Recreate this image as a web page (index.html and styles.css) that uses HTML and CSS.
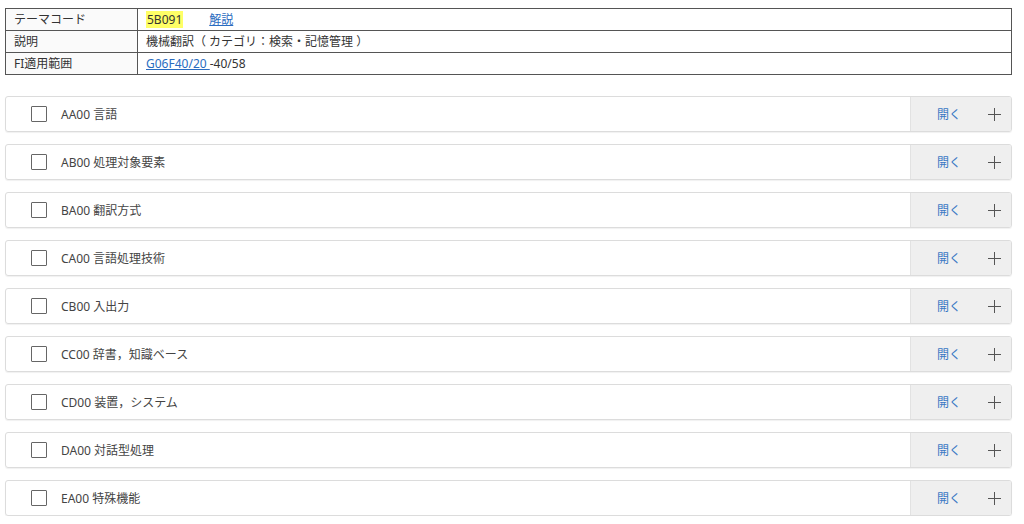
FILE: index.html
```html
<!DOCTYPE html>
<html lang="ja">
<head>
    <meta charset="UTF-8">
    <title>テーマコード 5B091</title>
    <link rel="stylesheet" href="styles.css">
</head>
<body>
    <div class="page">
        <table class="theme">
            <tr>
                <th>テーマコード</th>
                <td><span class="mark">5B091</span><a class="note" href="#">解説</a></td>
            </tr>
            <tr>
                <th>説明</th>
                <td>機械翻訳（ カテゴリ：検索・記憶管理 ）</td>
            </tr>
            <tr>
                <th>FI適用範囲</th>
                <td><a href="#">G06F40/20 </a>-40/58</td>
            </tr>
        </table>

        <div class="list">
            <div class="item">
                <label class="item-main"><span class="box"></span>AA00 言語</label>
                <div class="item-side"><span class="open">開く</span><svg class="plus" viewBox="0 0 13 13"><path d="M6.5 0V13M0 6.5H13"/></svg></div>
            </div>
            <div class="item">
                <label class="item-main"><span class="box"></span>AB00 処理対象要素</label>
                <div class="item-side"><span class="open">開く</span><svg class="plus" viewBox="0 0 13 13"><path d="M6.5 0V13M0 6.5H13"/></svg></div>
            </div>
            <div class="item">
                <label class="item-main"><span class="box"></span>BA00 翻訳方式</label>
                <div class="item-side"><span class="open">開く</span><svg class="plus" viewBox="0 0 13 13"><path d="M6.5 0V13M0 6.5H13"/></svg></div>
            </div>
            <div class="item">
                <label class="item-main"><span class="box"></span>CA00 言語処理技術</label>
                <div class="item-side"><span class="open">開く</span><svg class="plus" viewBox="0 0 13 13"><path d="M6.5 0V13M0 6.5H13"/></svg></div>
            </div>
            <div class="item">
                <label class="item-main"><span class="box"></span>CB00 入出力</label>
                <div class="item-side"><span class="open">開く</span><svg class="plus" viewBox="0 0 13 13"><path d="M6.5 0V13M0 6.5H13"/></svg></div>
            </div>
            <div class="item">
                <label class="item-main"><span class="box"></span>CC00 辞書，知識ベース</label>
                <div class="item-side"><span class="open">開く</span><svg class="plus" viewBox="0 0 13 13"><path d="M6.5 0V13M0 6.5H13"/></svg></div>
            </div>
            <div class="item">
                <label class="item-main"><span class="box"></span>CD00 装置，システム</label>
                <div class="item-side"><span class="open">開く</span><svg class="plus" viewBox="0 0 13 13"><path d="M6.5 0V13M0 6.5H13"/></svg></div>
            </div>
            <div class="item">
                <label class="item-main"><span class="box"></span>DA00 対話型処理</label>
                <div class="item-side"><span class="open">開く</span><svg class="plus" viewBox="0 0 13 13"><path d="M6.5 0V13M0 6.5H13"/></svg></div>
            </div>
            <div class="item">
                <label class="item-main"><span class="box"></span>EA00 特殊機能</label>
                <div class="item-side"><span class="open">開く</span><svg class="plus" viewBox="0 0 13 13"><path d="M6.5 0V13M0 6.5H13"/></svg></div>
            </div>
        </div>
    </div>
</body>
</html>
```

FILE: styles.css
```css
body {
    margin: 0;
    font-family: "Noto Sans", "Noto Sans CJK JP", sans-serif;
    font-size: 12px;
    color: #333;
    background: #fff;
}
.page {
    width: 1007px;
    padding: 8px 0 0 5px;
}
.theme {
    width: 100%;
    border-collapse: collapse;
    border: 1px solid #555;
}
.theme th,
.theme td {
    border: 1px solid #555;
    height: 21px;
    padding: 0 8px;
    text-align: left;
    font-weight: normal;
    line-height: 21px;
}
.theme th {
    width: 115px;
    background: #fafafa;
}
.theme a {
    color: #2a6cc0;
}
.mark {
    background: #ffff66;
    padding: 0 1px;
}
.note {
    margin-left: 26px;
}
.list {
    margin-top: 21px;
    display: flex;
    flex-direction: column;
    gap: 12px;
}
.item {
    display: flex;
    height: 34px;
    border: 1px solid #dcdcdc;
    border-radius: 3px;
    box-shadow: 0 1px 1px rgba(0,0,0,0.06);
    overflow: hidden;
}
.item-main {
    flex: 1;
    display: flex;
    align-items: center;
    padding-left: 25px;
    color: #444;
}
.box {
    width: 14px;
    height: 14px;
    border: 1px solid #666;
    border-radius: 1px;
    margin-right: 14px;
}
.item-side {
    width: 100px;
    display: flex;
    align-items: center;
    background: #efefef;
    border-left: 1px solid #e2e2e2;
}
.open {
    margin-left: 26px;
    color: #3a78c4;
}
.plus {
    margin-left: 27px;
    width: 13px;
    height: 13px;
    fill: none;
    stroke: #555;
    stroke-width: 1;
}
```
